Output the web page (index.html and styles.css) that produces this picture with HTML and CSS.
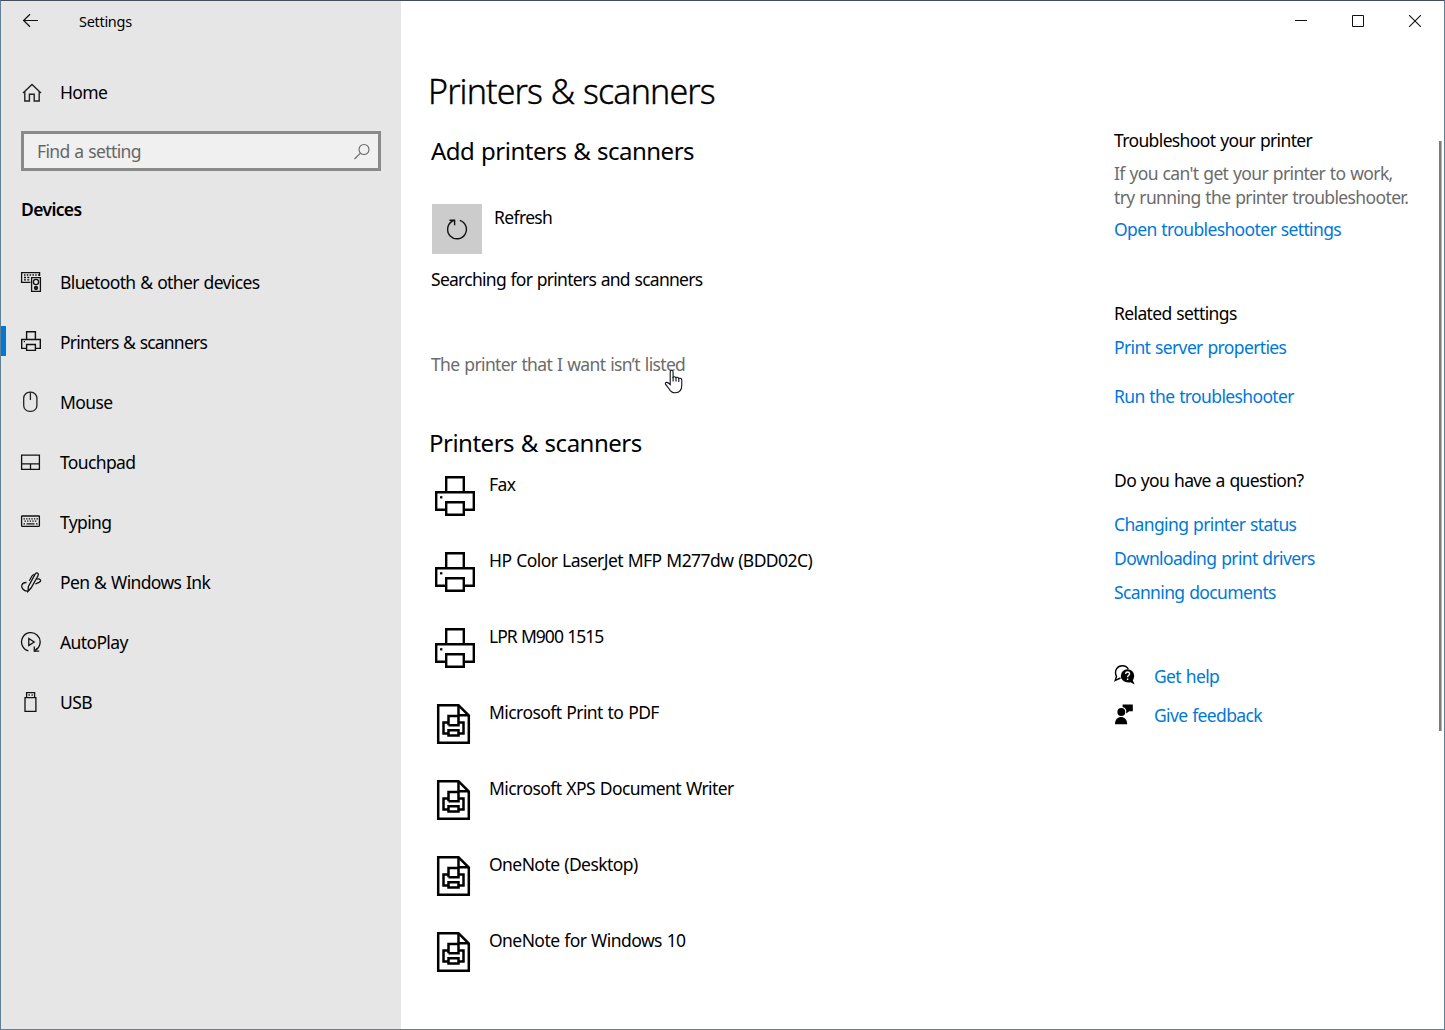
FILE: index.html
```html
<!DOCTYPE html>
<html lang="en">
<head>
<meta charset="utf-8">
<title>Settings</title>
<link rel="stylesheet" href="styles.css">
</head>
<body>
<svg class="defs" width="0" height="0">
  <symbol id="printer" viewBox="0 0 42 42">
    <g fill="#fff" stroke="#000" stroke-width="2.4">
      <path d="M12.2 17V2.2H29.8V17"/>
      <path d="M11.5 34.8H2.2V17.2H39.8V34.8H30.5"/>
      <path d="M12.2 27.2H29.8V39.8H12.2Z"/>
    </g>
    <path d="M6 21.2h2.4v2.2H6z"/>
  </symbol>
  <symbol id="docprinter" viewBox="0 0 42 42">
    <g fill="none" stroke="#000" stroke-width="2.5">
      <path d="M4.2 2.2H24.5L34.8 12.5V39.8H4.2Z"/>
      <path d="M24.5 2.2V12.3H34.8"/>
      <path d="M14.5 22.3V13H24.5V22.3H14.5M14.2 19.5H9.5V30.5H14M25 30.5H29.5V19.5H25"/>
      <path d="M14.5 27.2H24.5V32.5H14.5Z"/>
    </g>
  </symbol>
</svg>
<div class="window">
  <aside class="sidebar">
    <header class="titlebar">
      <svg class="back" width="18" height="16" viewBox="0 0 18 16"><path d="M16 7.5H1.5M8 1.2L1.6 7.5L8 13.8" fill="none" stroke="#111" stroke-width="1.2"/></svg>
      <span class="apptitle">Settings</span>
    </header>
    <a class="home">
      <svg width="24" height="24" viewBox="0 0 24 24"><path d="M3 12L12 3.4L21 12M4.8 10.4V20H9.4V13.3H14.2V20H19.2V10.4" fill="none" stroke="#222" stroke-width="1.4"/></svg>
      <span>Home</span>
    </a>
    <div class="search">
      <span>Find a setting</span>
      <svg width="18" height="18" viewBox="0 0 18 18"><circle cx="11" cy="6.5" r="5" fill="none" stroke="#666" stroke-width="1.1"/><path d="M7.4 10.2L1.5 16" stroke="#666" stroke-width="1.1"/></svg>
    </div>
    <h2 class="group">Devices</h2>
    <nav class="nav">
      <a class="item"><svg width="24" height="24" viewBox="0 0 24 24" fill="none" stroke="#111" stroke-width="1.3"><path d="M10.5 11.4H1.6V1.6H19.6V5"/><path d="M4 4H19" stroke-dasharray="1.5 1.3"/><path d="M4 6.5H10M4 8.8H10" stroke-dasharray="2 1.3"/><path d="M11.6 6.6H20.4V20.4H11.6Z"/><circle cx="16" cy="11" r="2.6"/><circle cx="16" cy="17" r="1.5" fill="#333"/></svg><span>Bluetooth &amp; other devices</span></a>
      <a class="item active"><svg width="24" height="24" viewBox="0 0 24 24" fill="none" stroke="#111" stroke-width="1.4"><path d="M6.6 8V.7H15.4V8M6 17.4H1.7V8.5H20.3V17.4H16M6.6 13.5H15.4V19.4H6.6Z"/><path d="M3.8 10.6h1.2"/></svg><span>Printers &amp; scanners</span></a>
      <a class="item"><svg width="24" height="24" viewBox="0 0 24 24" fill="none" stroke="#222" stroke-width="1.3"><rect x="3.7" y="1.2" width="13.2" height="19.2" rx="6"/><path d="M10.4 1.2V9"/></svg><span>Mouse</span></a>
      <a class="item"><svg width="24" height="24" viewBox="0 0 24 24" fill="none" stroke="#111" stroke-width="1.3"><path d="M1.6 4.2H19.4V18.4H1.6ZM1.6 12.8H19.4M10.5 12.8V18.4"/></svg><span>Touchpad</span></a>
      <a class="item"><svg width="24" height="24" viewBox="0 0 24 24" fill="none" stroke="#111" stroke-width="1.3"><rect x="1.6" y="5" width="17.8" height="10.3" rx=".5"/><path d="M3.5 7.8H18M4.5 10.2H17" stroke-dasharray="1.4 1.2"/><path d="M3.5 12.8H5M6.5 12.8H14.5M16 12.8H17.6"/></svg><span>Typing</span></a>
      <a class="item"><svg width="24" height="24" viewBox="0 0 24 24" fill="none" stroke="#111" stroke-width="1.3"><path d="M8 20.3L8.4 15.5L15.4 2.6Q17 .8 18.4 3L18 4.8L11.2 16.8Z"/><path d="M14.8 3.7Q13.2 3.2 12 5L9.3 9.7M16.5 8.2C20.5 7.2 21.8 9.8 19.4 11.1C17.5 12.2 16.2 12.2 15.4 13.2M6.5 11.5C1.5 11.2.6 15.5 2.8 18C4 19.6 5.6 20.1 8 20.3"/></svg><span>Pen &amp; Windows Ink</span></a>
      <a class="item"><svg width="24" height="24" viewBox="0 0 24 24" fill="none" stroke="#111" stroke-width="1.3"><path d="M8.4 19.9A9.3 9.3 0 1 1 15.8 18.8M14.3 15.5V20.2H19.2"/><path d="M14.3 20.2L17.3 17.5M8.8 7.5L14.2 11L8.8 14.5Z"/></svg><span>AutoPlay</span></a>
      <a class="item"><svg width="24" height="24" viewBox="0 0 24 24" fill="none" stroke="#111" stroke-width="1.3"><path d="M6.6 6.5V1.6H14.6V6.5M5 20.4V6.6H15.9V20.4ZM8.5 4h1.3M11.5 4h1.3"/></svg><span>USB</span></a>
    </nav>
  </aside>
  <main class="content">
    <div class="controls">
      <svg width="12" height="12" viewBox="0 0 12 12"><path d="M0 5.5H12" stroke="#111"/></svg>
      <svg width="12" height="12" viewBox="0 0 12 12"><path d="M.5.5H11.5V11.5H.5Z" fill="none" stroke="#111"/></svg>
      <svg width="12" height="12" viewBox="0 0 12 12"><path d="M0 0L12 12M12 0L0 12" stroke="#111" stroke-width="1.1"/></svg>
    </div>
    <div class="columns">
      <section class="primary">
        <h1>Printers &amp; scanners</h1>
        <h2 class="add-title">Add printers &amp; scanners</h2>
        <div class="refresh">
          <span class="tile"><svg width="26" height="26" viewBox="0 0 26 26" fill="none" stroke="#111" stroke-width="1.4"><path d="M15.8 4.4A9.4 9.4 0 1 1 8.4 5.2L10 4.3M5.5 4.3H10.6V9.2"/></svg></span>
          <span class="label">Refresh</span>
        </div>
        <p class="searching">Searching for printers and scanners</p>
        <p class="missing"><span>The printer that I want isn’t listed</span>
          <svg class="cursor" width="20" height="26" viewBox="0 0 20 26"><path d="M6.2 15.5V3Q6.2 1.3 7.6 1.3T9.1 3V8.2Q10.2 7 11.9 8.6Q13.7 7.7 14.7 9.4Q17.8 8.6 17.8 11.5V16Q17.8 23.5 11.5 23.8Q7 24 5.2 20L1.5 15.2Q1 13.3 2.7 13.4Q4 13.5 6.2 15.5Z" fill="#fff" stroke="#112" stroke-width="1.1"/><path d="M9.1 8V12.5M12 8.5V12.5M14.8 9.4V13" stroke="#112" stroke-width="1.1"/></svg>
        </p>
        <h2 class="list-title">Printers &amp; scanners</h2>
        <ul class="devices">
          <li><svg width="42" height="42"><use href="#printer"/></svg><span>Fax</span></li>
          <li><svg width="42" height="42"><use href="#printer"/></svg><span>HP Color LaserJet MFP M277dw (BDD02C)</span></li>
          <li class="digits"><svg width="42" height="42"><use href="#printer"/></svg><span>LPR M900 1515</span></li>
          <li><svg width="42" height="42"><use href="#docprinter"/></svg><span>Microsoft Print to PDF</span></li>
          <li><svg width="42" height="42"><use href="#docprinter"/></svg><span>Microsoft XPS Document Writer</span></li>
          <li><svg width="42" height="42"><use href="#docprinter"/></svg><span>OneNote (Desktop)</span></li>
          <li><svg width="42" height="42"><use href="#docprinter"/></svg><span>OneNote for Windows 10</span></li>
        </ul>
      </section>
      <section class="related">
        <h3>Troubleshoot your printer</h3>
        <p class="hint">If you can't get your printer to work,<br>try running the printer troubleshooter.</p>
        <a class="open">Open troubleshooter settings</a>
        <h3 class="related-title">Related settings</h3>
        <a class="server">Print server properties</a>
        <a class="run">Run the troubleshooter</a>
        <h3 class="question">Do you have a question?</h3>
        <a class="faq first">Changing printer status</a>
        <a class="faq">Downloading print drivers</a>
        <a class="faq">Scanning documents</a>
        <div class="support help"><svg width="24" height="24" viewBox="0 0 24 24"><path d="M6.5 14L1.2 16.4L2.5 12.5C-.5 6 4 1.5 8.5 1.7C11.5 1.8 13.5 3.4 14.3 5" fill="none" stroke="#000" stroke-width="1.4"/><path d="M20.7 20.5L16.4 18.3C11 19.3 6.8 16 6.8 12A6.7 6.7 0 0 1 20.2 11.8Q20.2 14.8 18.8 16.4Z"/><path d="M11.5 9.8Q11.7 8 13.6 8T15.6 9.8C15.6 11.3 13.6 11.3 13.6 13.2M13.6 14.5V16" fill="none" stroke="#fff" stroke-width="1.4"/></svg><a>Get help</a></div>
        <div class="support"><svg width="24" height="24" viewBox="0 0 24 24"><circle cx="7.3" cy="9" r="3.9"/><path d="M1 21.2C1 11.5 13.2 11.5 13.2 21.2ZM8.6 1.4H18.8V8.3H15.2L12.2 10.6V7Q11.4 4.4 8.6 4Z"/></svg><a>Give feedback</a></div>
      </section>
    </div>
    <div class="scrollbar"></div>
  </main>
</div>
</body>
</html>
```
FILE: styles.css
```css
* { box-sizing: border-box; }
body { margin: 0; font-family: "Segoe UI", "Noto Sans", "Open Sans", sans-serif; font-size: 17.5px; line-height: 24px; letter-spacing: -0.63px; word-spacing: 0.8px; color: #000; }
h1, h2, h3, p, ul { margin: 0; padding: 0; font-weight: 400; font-size: inherit; }
a, h3, h2, p { display: block; white-space: nowrap; }
svg { flex: none; display: block; }
.defs { position: absolute; }
.window { display: flex; width: 1445px; height: 1030px; border: 1px solid #627f98; border-top-color: #454c5a; background: #fff; overflow: hidden; }
.sidebar { width: 400px; background: #e6e6e6; flex: none; }
.titlebar { display: flex; height: 40px; padding: 0 0 0 21px; align-items: center; font-size: 14.5px; letter-spacing: -0.3px; }
.apptitle { margin-left: 39px; padding-bottom: 1px; }
.home { display: flex; align-items: center; height: 24px; margin-top: 40px; padding-left: 19px; gap: 16px; }
.home span, .item span { padding-bottom: 2px; }
.home span { letter-spacing: -0.6px; }
.search { display: flex; justify-content: space-between; align-items: center; height: 40px; width: 360px; margin: 26px 0 0 20px; border: 3px solid #8a8a8a; background: #f0f0f0; color: #666; padding: 1px 7px 0 13px; }
.search span { padding-bottom: 2px; }
.group { margin: 26px 0 0 20px; font-weight: 600; }
.nav { margin-top: 31px; }
.item { display: flex; height: 60px; align-items: center; padding: 1px 0 0 19px; gap: 16px; }
.item svg { position: relative; top: 0.5px; }
.item.active { background: linear-gradient(#0078d7, #0078d7) 0 14px / 5px 30px no-repeat; letter-spacing: -0.8px; }
.content { position: relative; flex: 1; }
.controls { display: flex; height: 40px; align-items: center; justify-content: flex-end; gap: 45px; padding-right: 23px; }
.columns { display: flex; }
.primary { width: 713px; padding-left: 28px; }
h1 { font-size: 34px; line-height: 46px; font-weight: 300; -webkit-text-stroke: 0.35px #000; margin: 27px 0 0 -1px; letter-spacing: -0.9px; white-space: nowrap; }
.primary h2 { font-size: 24px; line-height: 34px; letter-spacing: -0.5px; word-spacing: 1px; }
.primary .add-title { margin: 20px 0 0 2px; }
.refresh { display: flex; margin: 36px 0 0 3px; gap: 12px; }
.tile { display: flex; width: 50px; height: 50px; background: #ccc; align-items: center; justify-content: center; }
.label { padding-top: 1px; }
.searching { margin: 13px 0 0 2px; letter-spacing: -0.73px; }
.missing { position: relative; margin: 61px 0 0 2px; color: #6b6b6b; letter-spacing: -0.65px; word-spacing: 1px; }
.cursor { position: absolute; left: 233px; top: 17px; }
.primary .list-title { margin-top: 50px; }
.devices { list-style: none; margin-top: 12px; padding-left: 5px; letter-spacing: -0.57px; }
.devices .digits { letter-spacing: -1px; }
.devices li { display: flex; height: 76px; gap: 13px; white-space: nowrap; }
.devices svg { margin-top: 3px; }
.related { padding-top: 87px; }
.related a { color: #0078d7; }
.hint { margin-top: 9px; color: #6b6b6b; }
.open { margin-top: 8px; }
.related-title { margin-top: 60px; }
.server { margin-top: 10px; }
.run { margin-top: 25px; }
.question { margin-top: 60px; }
.faq { margin-top: 10px; }
.faq.first { margin-top: 20px; }
.support { display: flex; gap: 16px; margin-top: 15px; }
.support.help { margin-top: 60px; }
.support svg { margin-top: 0; }
.scrollbar { position: absolute; right: 2px; top: 140px; width: 3px; height: 590px; background: #7a7a7a; border-right: 1px solid #b5b5b5; }
```
